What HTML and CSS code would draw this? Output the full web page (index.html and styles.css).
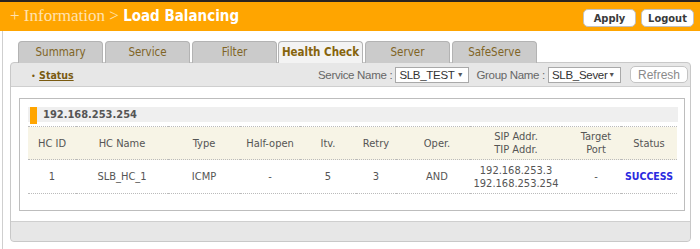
FILE: index.html
```html
<!DOCTYPE html>
<html>
<head>
<meta charset="utf-8">
<link rel="stylesheet" href="styles.css">
</head>
<body>
<div class="topline"></div>
<div class="header">
  <div class="title"><span class="crumb">+ Information &gt; </span><span class="page">Load Balancing</span></div>
  <div class="actions">
    <button class="hbtn">Apply</button>
    <button class="hbtn">Logout</button>
  </div>
</div>
<div class="main">
  <div class="tabs">
    <div class="tab">Summary</div>
    <div class="tab">Service</div>
    <div class="tab">Filter</div>
    <div class="tab active">Health Check</div>
    <div class="tab">Server</div>
    <div class="tab">SafeServe</div>
  </div>
  <div class="panel">
    <div class="toolbar">
      <div class="status-link"><span class="bullet">•</span> <a>Status</a></div>
      <div class="filters">
        <span class="lbl">Service Name :</span>
        <div class="sel sel1">SLB_TEST <span class="arr">▼</span></div>
        <span class="lbl">Group Name :</span>
        <div class="sel sel2">SLB_Sever <span class="arr">▼</span></div>
        <button class="refresh">Refresh</button>
      </div>
    </div>
    <div class="body">
      <div class="box">
        <div class="sechead"><span class="mark"></span>192.168.253.254</div>
        <table class="grid">
          <thead>
            <tr>
              <th class="c1">HC ID</th>
              <th class="c2">HC Name</th>
              <th class="c3">Type</th>
              <th class="c4">Half-open</th>
              <th class="c5">Itv.</th>
              <th class="c6">Retry</th>
              <th class="c7">Oper.</th>
              <th class="c8">SIP Addr.<br>TIP Addr.</th>
              <th class="c9">Target<br>Port</th>
              <th class="c10">Status</th>
            </tr>
          </thead>
          <tbody>
            <tr>
              <td>1</td>
              <td>SLB_HC_1</td>
              <td>ICMP</td>
              <td>-</td>
              <td>5</td>
              <td>3</td>
              <td class="p7">AND</td>
              <td>192.168.253.3<br>192.168.253.254</td>
              <td class="p9">-</td>
              <td class="ok">SUCCESS</td>
            </tr>
          </tbody>
        </table>
      </div>
    </div>
    <div class="footer"></div>
  </div>
</div>
</body>
</html>
```
FILE: styles.css
```css
* { box-sizing: border-box; }
html, body { margin: 0; padding: 0; background: #fff; }
body { width: 700px; height: 249px; overflow: hidden; font-family: "DejaVu Sans Condensed", "DejaVu Sans", sans-serif; font-size: 11px; color: #555; }

.topline { height: 2px; background: #2a2320; }
.header { height: 29px; background: #ffa500; display: flex; align-items: center; justify-content: space-between; padding: 0 6px 0 10px; }
.title { line-height: 29px; white-space: nowrap; }
.crumb { font-family: "Liberation Serif", serif; color: #ffe2b0; font-size: 17px; }
.page { font-family: "DejaVu Sans Condensed", "DejaVu Sans", sans-serif; font-weight: bold; color: #fff; font-size: 15px; }
.actions { display: flex; gap: 5px; padding-top: 3px; }
.hbtn { width: 53px; height: 18px; border: 1px solid #c2c2c2; border-radius: 5px; background: #fff; font-family: "DejaVu Sans Condensed", "DejaVu Sans", sans-serif; font-weight: bold; font-size: 11px; color: #3a3a3a; padding: 0; }

.main { margin-left: 2px; border-left: 1px solid #cfcfcf; padding: 10px 9px 0 7px; height: 218px; }
.tabs { display: flex; gap: 2px; padding-left: 8px; height: 21px; position: relative; z-index: 1; }
.tab { width: 85px; height: 22px; background: #cbcbcb; border: 1px solid #b3b3b3; border-bottom: none; border-radius: 4px 4px 0 0; text-align: center; line-height: 20px; color: #806425; font-size: 11.5px; }
.tab:nth-child(4) { margin-left: -1px; }
.tab.active { background: #f3f3f3; color: #86640c; font-weight: bold; }

.panel { border: 1px solid #c8c8c8; border-radius: 4px; background: #e7e7e7; height: 180px; display: flex; flex-direction: column; }
.toolbar { height: 24px; border-bottom: 1px solid #cfcfcf; display: flex; align-items: center; justify-content: space-between; padding: 0 2px 0 20px; }
.status-link { color: #7a5a10; font-weight: bold; font-size: 10.5px; }
.bullet { font-weight: normal; font-size: 9px; }
.status-link a { text-decoration: underline; }
.filters { display: flex; align-items: center; font-family: "Liberation Sans", Arial, sans-serif; font-size: 11.5px; letter-spacing: -0.3px; color: #666; }
.lbl { margin-right: 3px; }
.sel { height: 16px; border: 1px solid #a9a9a9; background: #fff; color: #333; line-height: 14px; padding: 0 5px 0 3px; margin-right: 7px; display: flex; justify-content: space-between; font-size: 11.5px; }
.sel1 { width: 74px; }
.sel2 { width: 73px; }
.arr { font-size: 7px; color: #555; }
.refresh { width: 58px; height: 17px; border: 1px solid #c4c4c4; border-radius: 5px; background: #fff; font-family: "Liberation Sans", Arial, sans-serif; font-size: 12px; color: #8a8a8a; padding: 0; margin-left: 2px; }

.body { background: #fff; padding: 11px 5px 10px 8px; }
.box { border: 1px solid #bdbdbd; padding: 8px 6px 11px 8px; height: 113px; }
.sechead { height: 19px; background: #efefef; display: flex; align-items: center; font-weight: bold; font-size: 11px; color: #555; border-bottom: 4px solid #fff; }
.mark { width: 7px; height: 17px; background: #ffa500; margin: 1px 6px 0 2px; }
.grid { width: 649px; table-layout: fixed; border-collapse: collapse; border-top: 1px dotted #bbb; }
.grid th { background: #f7f4e6; font-weight: normal; height: 33px; line-height: 13px; border-bottom: 1px dotted #bbb; padding: 0; text-align: center; }
.grid td { height: 34px; line-height: 13px; text-align: center; padding: 0; border-bottom: 1px dotted #bbb; }
.c1 { width: 48px; }
.c2 { width: 92px; }
.c3 { width: 72px; }
.c4 { width: 60px; }
.c5 { width: 56px; }
.c6 { width: 40px; }
.grid .c7, .grid .p7 { width: 74px; padding-left: 8px; }
.c8 { width: 92px; }
.grid .c9, .grid .p9 { width: 59px; padding-left: 9px; }
.c10 { width: 56px; }
.ok { color: #2a2ae0; font-weight: bold; font-size: 10.5px; }

.footer { flex: 1; border-top: 1px solid #cfcfcf; background: #e7e7e7; border-radius: 0 0 4px 4px; }
```
